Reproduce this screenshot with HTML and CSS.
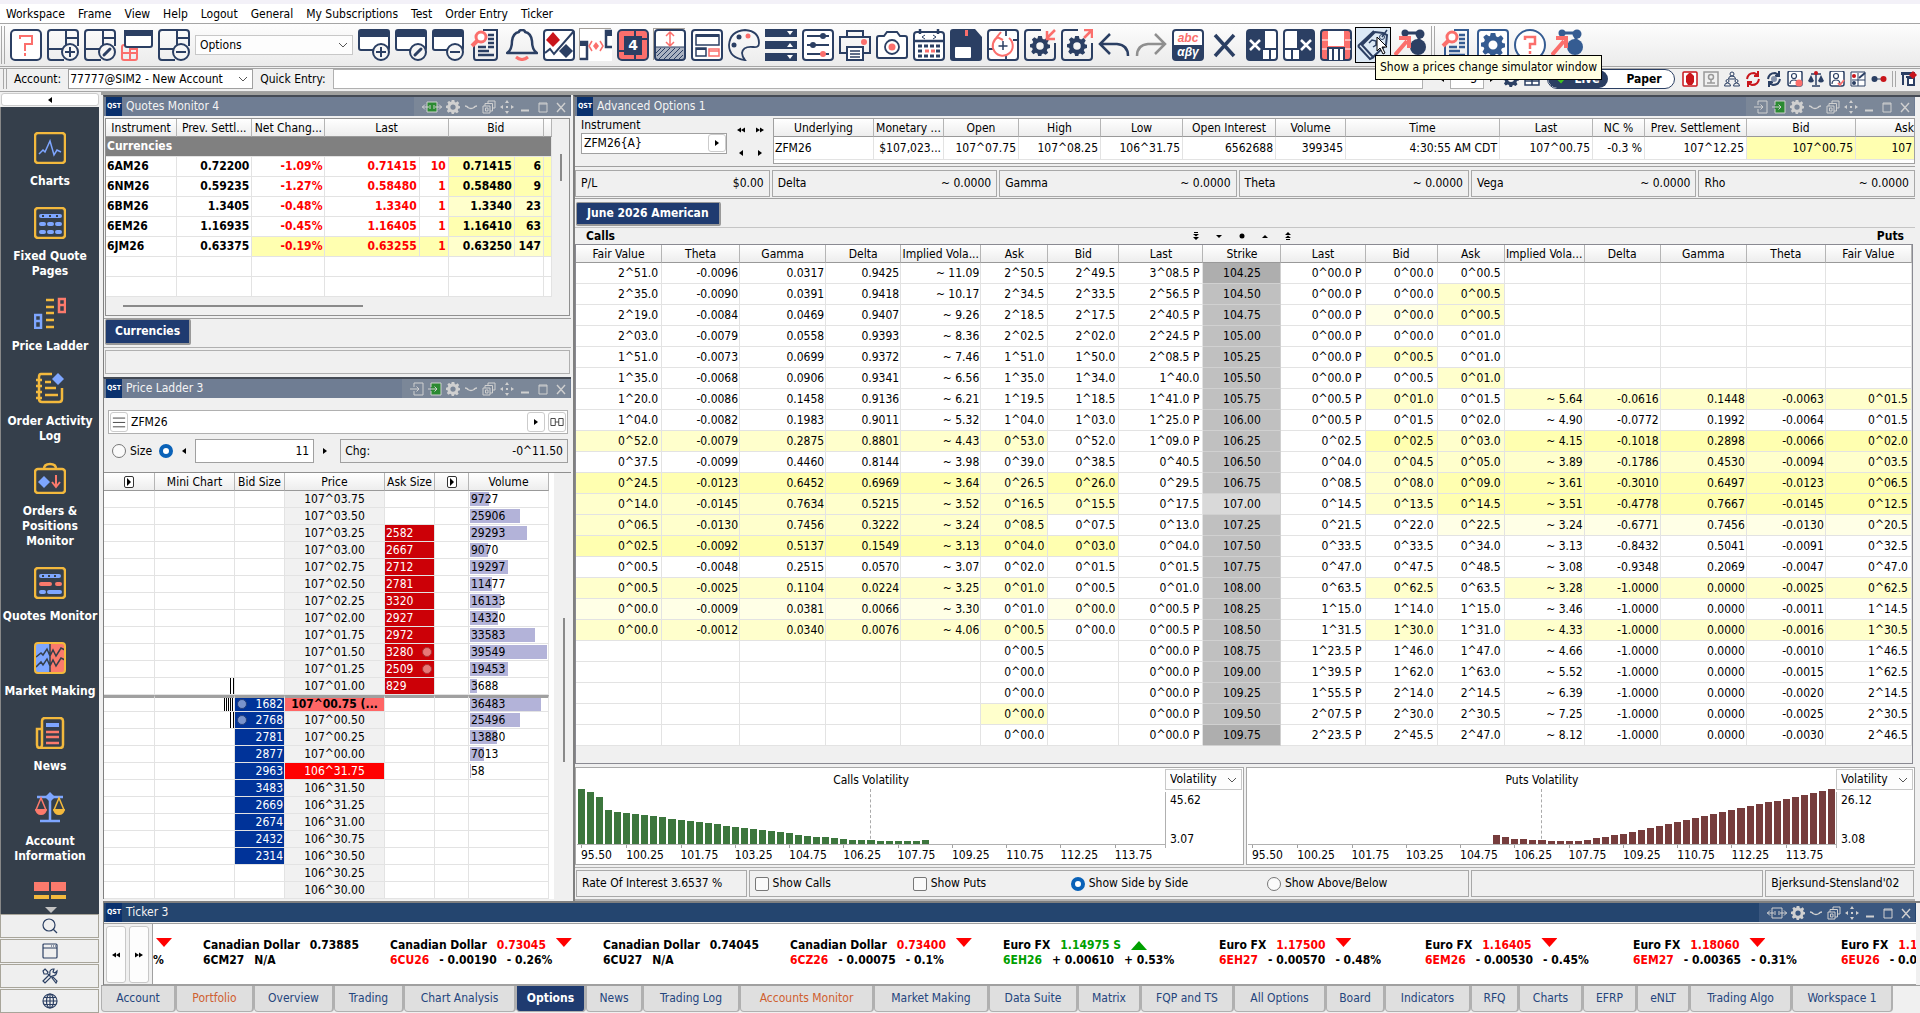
FILE: index.html
```html
<!DOCTYPE html>
<html lang="en">
<head>
<meta charset="utf-8">
<title>QST Workspace - Options</title>
<link rel="stylesheet" href="styles.css">
</head>
<body>
<svg class="sprite" aria-hidden="true">
  <symbol id="grid" viewBox="0 0 32 32"><path d="M17 31H4q-3 0-3-3V4q0-3 3-3h24q3 0 3 3v13M19 1v16M1 20h16M19 9h12" fill="none" stroke="#2b3f63" stroke-width="2"/></symbol>
  <symbol id="win" viewBox="0 0 32 32"><rect x="1" y="1" width="30" height="20" rx="2" fill="#fff" stroke="#2b3f63" stroke-width="2"/><path d="M1 1h30v7H1z" fill="#2b3f63"/></symbol>
  <symbol id="badge" viewBox="0 0 32 32"><circle cx="23" cy="23" r="8" fill="#f6f6f6" stroke="#2b3f63" stroke-width="2"/></symbol>
  <symbol id="plus" viewBox="0 0 32 32"><use href="#badge"/><path d="M23 18v10M18 23h10" stroke="#2b3f63" stroke-width="2"/></symbol>
  <symbol id="pen" viewBox="0 0 32 32"><use href="#badge"/><path d="m20 26 6-6" stroke="#2b3f63" stroke-width="3" stroke-linecap="round"/></symbol>
  <symbol id="minus" viewBox="0 0 32 32"><use href="#badge"/><path d="M18 23h10" stroke="#2b3f63" stroke-width="2"/></symbol>
  <symbol id="report" viewBox="0 0 32 32"><path d="M14 1h14v27q0 3-3 3H7q-2 0-2-3V17" fill="none" stroke="currentColor" stroke-width="2"/><path d="M19 6h6M19 10h6M19 14h6M9 18h8M19 18h6M9 22h11M9 26h16" stroke="currentColor" stroke-width="2.500"/><circle cx="12" cy="8" r="5" fill="#fff" stroke="#fb6f6c" stroke-width="3"/><path d="m8 12-5 5" stroke="#fb6f6c" stroke-width="4"/></symbol>
  <symbol id="gear" viewBox="0 0 16 16"><path fill="currentColor" fill-rule="evenodd" d="M6.500 0h3l.5 2.200 1.300.600L13.300 1.500l1.700 2-1.200 2 .5 1.100L16 7v2.500l-2 .6-.6 1.200 1.100 2-2 1.700-1.900-1.100-1.100.5L9 16H6.500L6 14l-1.300-.6-2 1.100L1 12.500l1.200-2-.5-1.200L0 9V6.500L2 6l.6-1.300-1.100-2 2-1.700 1.900 1.200L6 2zM8 5a3 3 0 1 0 0 6 3 3 0 0 0 0-6z"/></symbol>
  <symbol id="share" viewBox="0 0 32 32"><path d="M12 4h12M25 5v12" stroke="currentColor" stroke-width="3"/><circle cx="11" cy="4" r="3.500" fill="currentColor"/><circle cx="26" cy="5" r="4.500" fill="currentColor"/><circle cx="24" cy="18" r="8" fill="currentColor"/><path d="M1 26 13 12M5 9h10v10" fill="none" stroke="#fb6f6c" stroke-width="4"/></symbol>
  <symbol id="gears" viewBox="0 0 32 32"><path d="M17 1H4q-3 0-3 3v24q0 3 3 3h24q3 0 3-3V14" fill="none" stroke="#2b3f63" stroke-width="2"/><use href="#gear" x="6" y="7" width="20" height="20" color="#2b3f63"/></symbol>
  <symbol id="dock" viewBox="0 0 14 14"><path d="M4 5V1h9v12H4V9M0 7h9M6.500 4.500 9 7 6.500 9.500" fill="none" stroke="currentColor"/></symbol>
  <symbol id="dockgreen" viewBox="0 0 14 14"><path d="M3 1h10v12H3z" fill="#2b8a32"/><path d="M3 5V1h10v12H3V9M0 7h9M6.500 4.500 9 7 6.500 9.500" fill="none" stroke="currentColor"/></symbol>
  <symbol id="link" viewBox="0 0 20 14"><path d="M5 2h10v10H5zM0 7h7M13 7h7M3 4.500.5 7 3 9.500M17 4.500 19.500 7 17 9.500M8 5v4M12 5v4" fill="none" stroke="currentColor"/></symbol>
  <symbol id="linkgreen" viewBox="0 0 20 14"><path d="M5 2h10v10H5z" fill="#2b8a32"/><use href="#link"/></symbol>
  <symbol id="down" viewBox="0 0 14 14"><path d="M1 6q2 0 3 1.500 3 2 6 0Q11 6 13 6" fill="none" stroke="currentColor" stroke-width="1.500"/></symbol>
  <symbol id="stack" viewBox="0 0 14 14"><path d="M1 6h7v7H1zM3 6V3.500h7.500V11H8M6 3.500V1h7v7h-2.500M3.500 8h2.500v3H3.500z" fill="none" stroke="currentColor"/></symbol>
  <symbol id="move" viewBox="0 0 14 14"><path d="m7 0 2 3H5zM7 14l2-3H5zM0 7l3-2v4zM14 7l-3-2v4zM6 6h2v2H6z" fill="currentColor"/></symbol>
  <symbol id="min" viewBox="0 0 14 14"><path d="M3 10.500h8" stroke="currentColor" stroke-width="2"/></symbol>
  <symbol id="max" viewBox="0 0 14 14"><path d="M3 3h8v9H3zM3 4h8" fill="none" stroke="currentColor"/></symbol>
  <symbol id="close" viewBox="0 0 14 14"><path d="m3 3 8 9M11 3l-8 9" stroke="currentColor" stroke-width="1.400"/></symbol>
  <symbol id="chev" viewBox="0 0 10 6"><path d="m1 1 4 4 4-4" fill="none" stroke="#555"/></symbol>
  <symbol id="tl" viewBox="0 0 8 8"><path d="M6 1v6L2 4z"/></symbol>
  <symbol id="tr" viewBox="0 0 8 8"><path d="M2 1v6l4-3z"/></symbol>
  <symbol id="tll" viewBox="0 0 8 8"><path d="M4 1.500v5L0 4zM8 1.500v5L4 4z"/></symbol>
  <symbol id="trr" viewBox="0 0 8 8"><path d="M0 1.500v5L4 4zM4 1.500v5L8 4z"/></symbol>
  <symbol id="man" viewBox="0 0 16 16"><rect x="1" y="0" width="14" height="15" rx="2" fill="#fff" stroke="#2b3f63" stroke-width="1.500"/><circle cx="7" cy="5" r="2.500" fill="none" stroke="#2b3f63" stroke-width="1.200"/><path d="M3 13q0-4 4-4t4 4" fill="none" stroke="#2b3f63" stroke-width="1.200"/></symbol>
</svg>

<header class="top">
  <nav class="menu" aria-label="Main menu">
    <button>Workspace</button><button>Frame</button><button>View</button><button>Help</button><button>Logout</button><button>General</button><button>My Subscriptions</button><button>Test</button><button>Order Entry</button><button>Ticker</button>
  </nav>

  <div class="toolbar" role="toolbar" aria-label="Workspace tools">
    <span class="grip"></span>
    <button aria-label="Help"><svg viewBox="0 0 32 32"><rect x="1" y="1" width="30" height="30" rx="4" fill="#fff" stroke="#2b3f63" stroke-width="2"/><path d="M10 10V7h12v8h-7v7M15 24v3" fill="none" stroke="#fb6f6c" stroke-width="2"/></svg></button>
    <button aria-label="Add workspace"><svg viewBox="0 0 32 32"><use href="#grid"/><use href="#plus"/></svg></button>
    <button aria-label="Edit workspace"><svg viewBox="0 0 32 32"><use href="#grid"/><use href="#pen"/></svg></button>
    <button aria-label="Copy workspace"><svg viewBox="0 0 32 32"><path d="M1 18q0-2 2-2h13v13q0 2-2 2H3q-2 0-2-2zM9 16v15M1 24h15M9 20h7" fill="none" stroke="#fb6f6c" stroke-width="2"/><rect x="4" y="2" width="27" height="16" rx="2" fill="#fff" stroke="#2b3f63" stroke-width="2"/><path d="M3 1h29v6H3z" fill="#2b3f63"/></svg></button>
    <button aria-label="Remove workspace"><svg viewBox="0 0 32 32"><use href="#grid"/><use href="#minus"/></svg></button>
    <span class="pick pick-wide"><select aria-label="Workspace"><option>Options</option></select><svg class="chev"><use href="#chev"/></svg></span>
    <button aria-label="Add window"><svg viewBox="0 0 32 32"><use href="#win"/><use href="#plus"/></svg></button>
    <button aria-label="Edit window"><svg viewBox="0 0 32 32"><use href="#win"/><use href="#pen"/></svg></button>
    <button aria-label="Remove window"><svg viewBox="0 0 32 32"><use href="#win"/><use href="#minus"/></svg></button>
    <button aria-label="Reports" class="navy"><svg viewBox="0 0 32 32"><use href="#report"/></svg></button>
    <button aria-label="Alerts"><svg viewBox="0 0 32 32"><path d="M1 24q5-3 5-12Q7 4 13 3q0-2 3-2t3 2q6 1 7 9 0 9 5 12z" fill="none" stroke="#2b3f63" stroke-width="2.500" stroke-linejoin="round"/><path d="M10 28q6 5 12 0" fill="none" stroke="#fb6f6c" stroke-width="3"/></svg></button>
    <button aria-label="Charts"><svg viewBox="0 0 32 32"><rect x="1" y="1" width="30" height="30" rx="3" fill="#fff" stroke="#2b3f63" stroke-width="2"/><path d="m10 3 7 8-7 7-7-7z" fill="#c9151b"/><path d="m23 15 7 7-7 7-7-7z" fill="#2b3f63"/><path d="m2 24 5-4 4 5L31 2" fill="none" stroke="#2b3f63" stroke-width="2"/></svg></button>
    <button aria-label="Connect" class="sunken"><svg viewBox="0 0 32 32"><path d="M0 13h7v17H0M32 2h-6v16h6" fill="none" stroke="#2b3f63" stroke-width="2.500"/><path d="M0 12h8v5H0zM25 1h7v6h-7z" fill="#2b3f63"/><path d="m16 13 3 4-3 4-3-4z" fill="#fb6f6c"/><path d="m12 12-3 5 3 5M20 12l3 5-3 5" fill="none" stroke="#fb6f6c" stroke-width="1.500"/></svg></button>
    <button aria-label="Four monitors"><svg viewBox="0 0 32 32"><rect x="1" y="1" width="30" height="30" rx="4" fill="#fb6f6c" stroke="#2b3f63" stroke-width="2"/><path d="M18 0v8M0 22h8M24 10h8M18 24v8" stroke="#2b3f63" stroke-width="2"/><rect x="7" y="7" width="18" height="19" fill="#2b3f63"/><text x="16" y="21" class="svg-num">4</text></svg></button>
    <button aria-label="Fit height" class="sunken"><svg viewBox="0 0 32 32"><path d="M2 18h28v12H2z" fill="#aab2c1"/><path d="m3 27 8-8M2 24l5-5M5 30l11-11M10 30l11-11M15 30l11-11M20 30l9-9M25 30l4-4" stroke="#2b3f63"/><rect x="1" y="1" width="30" height="30" rx="3" fill="none" stroke="#2b3f63" stroke-width="2"/><path d="M1 18h30" stroke="#2b3f63"/><path d="M16 4v13M12 7l4-4 4 4M12 13l4 4 4-4" fill="none" stroke="#fb6f6c" stroke-width="1.500"/></svg></button>
    <button aria-label="Layout"><svg viewBox="0 0 32 32"><rect x="1" y="1" width="30" height="30" rx="3" fill="#fff" stroke="#2b3f63" stroke-width="2"/><path d="M5 6h23v10H5zM5 19h10v8H5z" fill="none" stroke="#2b3f63" stroke-width="1.500"/><path d="M5 5h23v3H5zM5 19h10v2H5z" fill="#2b3f63"/><path d="M18 20h10v7H18zM18 22h10" fill="none" stroke="#fb6f6c" stroke-width="1.500"/></svg></button>
    <button aria-label="Colours"><svg viewBox="0 0 32 32"><path d="M17 31Q1 29 1 16 2 2 17 1q14 1 14 13 0 5-6 4-10-1-11 6 0 3 3 7z" fill="none" stroke="#2b3f63" stroke-width="1.800"/><circle cx="11" cy="8" r="2.500" fill="#2b3f63"/><circle cx="6" cy="16" r="2.500" fill="#2b3f63"/><circle cx="20" cy="7" r="2.500" fill="#fb6f6c"/></svg></button>
    <button aria-label="Rows"><svg viewBox="0 0 32 32"><path d="M0 0h32v8H0zM0 12h32v8H0zM0 24h32v8H0z" fill="#2b3f63"/><path d="m22 2 3 4 3-4zM22 18l3-4 3 4zM22 26l3 4 3-4z" fill="#fff"/></svg></button>
    <button aria-label="Settings"><svg viewBox="0 0 32 32"><rect x="1" y="1" width="30" height="30" rx="3" fill="#fff" stroke="#2b3f63" stroke-width="2"/><path d="M5 7h22M5 16h22M5 25h22" stroke="#2b3f63" stroke-width="1.800"/><circle cx="21" cy="7" r="3" fill="#2b3f63"/><circle cx="11" cy="16" r="3" fill="#2b3f63"/><circle cx="21" cy="25" r="3" fill="#fb6f6c"/></svg></button>
    <button aria-label="Print"><svg viewBox="0 0 32 32"><path d="M8 8V2h16v6M8 24H1V8h30v16h-7" fill="none" stroke="#2b3f63" stroke-width="2"/><path d="M8 18h16v13H8z" fill="#fff" stroke="#2b3f63" stroke-width="2"/><path d="M11 22h10M11 25h10M11 28h10" stroke="#2b3f63" stroke-width="1.500"/><circle cx="25" cy="13" r="3" fill="#fb6f6c"/></svg></button>
    <button aria-label="Screenshot"><svg viewBox="0 0 32 32"><path d="M3 7h5l3-4h10l3 4h5q2 0 2 2v18q0 2-2 2H3q-2 0-2-2V9q0-2 2-2z" fill="#fff" stroke="#2b3f63" stroke-width="2"/><circle cx="16" cy="18" r="7" fill="none" stroke="#2b3f63" stroke-width="1.800"/><circle cx="16" cy="18" r="3.500" fill="#fb6f6c"/></svg></button>
    <button aria-label="Calendar"><svg viewBox="0 0 32 32"><rect x="1" y="3" width="30" height="28" rx="3" fill="#fff" stroke="#2b3f63" stroke-width="2"/><path d="M1 12h30M7 0v5M25 0v5" stroke="#2b3f63" stroke-width="2.500"/><path d="m12 6-3 2 3 2M20 6l3 2-3 2" fill="none" stroke="#2b3f63"/><path d="M5 17h22M5 27h22" stroke="#2b3f63" stroke-width="3" stroke-dasharray="4 2"/><path d="M5 22h6M23 22h4" stroke="#2b3f63" stroke-width="3" stroke-dasharray="4 2"/><path d="M12 22h10" stroke="#fb6f6c" stroke-width="3" stroke-dasharray="4 2"/></svg></button>
    <button aria-label="Save"><svg viewBox="0 0 32 32"><path d="M3 0h22l7 8v21q0 3-3 3H3q-3 0-3-3V3q0-3 3-3z" fill="#2b3f63"/><path d="M15 1h3v6h-3z" fill="#fb6f6c"/><rect x="5" y="18" width="16" height="11" rx="1" fill="#fff"/></svg></button>
    <button aria-label="Restore"><svg viewBox="0 0 32 32"><rect x="1" y="1" width="30" height="30" rx="3" fill="#fff" stroke="#2b3f63" stroke-width="2"/><path d="M19 1v6M1 20h6M26 11h5M19 27v4" stroke="#2b3f63" stroke-width="1.800"/><path d="M11 8a10 10 0 1 0 11 1M14 3l-4 5 6 3" fill="none" stroke="#fb6f6c" stroke-width="2"/><path d="M16 12v9M11.500 17h9" stroke="#2b3f63" stroke-width="1.500"/></svg></button>
    <button aria-label="Import settings"><svg viewBox="0 0 32 32"><use href="#gears"/><path d="m31 1-8 8M23 2v8h8" fill="none" stroke="#fb6f6c" stroke-width="2.500"/></svg></button>
    <button aria-label="Export settings"><svg viewBox="0 0 32 32"><use href="#gears"/><path d="m23 9 8-8M23 1h8v8" fill="none" stroke="#fb6f6c" stroke-width="2.500"/></svg></button>
    <button aria-label="Undo"><svg viewBox="0 0 32 32"><path d="M12 5 2 15l10 10M2 15h17q11 1 11 12" fill="none" stroke="#2b3f63" stroke-width="2.500"/></svg></button>
    <button aria-label="Redo"><svg viewBox="0 0 32 32"><path d="m20 5 10 10-10 10M30 15H13Q2 16 2 27" fill="none" stroke="#8f8f8f" stroke-width="2.500"/></svg></button>
    <button aria-label="Fonts"><svg viewBox="0 0 32 32"><rect x="1" y="1" width="30" height="30" rx="3" fill="#fff" stroke="#2b3f63" stroke-width="2"/><path d="M1 16h30v12q0 3-3 3H4q-3 0-3-3z" fill="#2b3f63"/><text x="16" y="13" class="svg-abc">abc</text><text x="16" y="27" class="svg-abc svg-white">αβγ</text></svg></button>
    <button aria-label="Close all"><svg viewBox="0 0 32 32"><path d="m6 6 19 21M25 6 6 27" stroke="#2b3f63" stroke-width="3.500"/></svg></button>
    <button aria-label="Close left"><svg viewBox="0 0 32 32"><rect x="1" y="1" width="30" height="30" rx="3" fill="#fff" stroke="#2b3f63" stroke-width="2"/><path d="M3 1h16v20h-2v10H3l-2-2V3z" fill="#2b3f63"/><path d="M18 20h13M24 20v11" stroke="#2b3f63" stroke-width="2"/><path d="m4 11 10 10M14 11 4 21" stroke="#fff" stroke-width="2.500"/></svg></button>
    <button aria-label="Close right"><svg viewBox="0 0 32 32"><rect x="1" y="1" width="30" height="30" rx="3" fill="#fff" stroke="#2b3f63" stroke-width="2"/><path d="M14 1h15l2 2v26l-2 2H16V21h-2z" fill="#2b3f63"/><path d="M1 20h15M9 20v11" stroke="#2b3f63" stroke-width="2"/><path d="m18 11 10 10M28 11 18 21" stroke="#fff" stroke-width="2.500"/></svg></button>
    <button aria-label="Frame layout"><svg viewBox="0 0 32 32"><rect x="1" y="1" width="30" height="30" rx="3" fill="#fb6f6c" stroke="#2b3f63" stroke-width="2"/><path d="M8 2h16v15H8z" fill="#fff"/><path d="M8 19h16v12H8z" fill="#fff"/><path d="M8 31V19h16v12M13 19v12M19 19v12" fill="none" stroke="#2b3f63" stroke-width="2"/><path d="M2 11h6M2 20h5M25 11h6M25 20h6" stroke="#fff"/></svg></button>
    <button aria-label="Show a prices change simulator window" class="hot"><svg viewBox="0 0 32 32"><path d="M5 16 18 3l8 1 4 2-1 10-13 12zM1 17l12 13 4-2M1 17 17 2" fill="none" stroke="#2b3f63" stroke-width="2"/><circle cx="25" cy="8" r="2.500" fill="none" stroke="#2b3f63"/><path d="m25 8 5-7M12 14l3-3 4 1v4l-3 2" fill="none" stroke="#2b3f63" stroke-width="1.500"/></svg><svg class="cursor" viewBox="0 0 12 19"><path d="M1 1v14l3-3 3 6 2-1-3-6h5z" fill="#fff" stroke="#000"/></svg><span class="tip" role="tooltip">Show a prices change simulator window</span></button>
    <button aria-label="Share" class="navy"><svg viewBox="0 0 32 32"><use href="#share"/></svg></button>
    <span class="grip"></span>
    <button aria-label="Search reports" class="blue"><svg viewBox="0 0 32 32"><use href="#report"/></svg></button>
    <button aria-label="Preferences" class="blue"><svg viewBox="0 0 32 32"><rect x="1" y="1" width="30" height="30" rx="3" fill="#fff" stroke="#355c92" stroke-width="2"/><use href="#gear" x="4" y="4" width="24" height="24"/></svg></button>
    <button aria-label="About"><svg viewBox="0 0 32 32"><circle cx="16" cy="16" r="15" fill="#fff" stroke="#355c92" stroke-width="2"/><path d="M11 11V8h10v7h-5v5M16 22v3" fill="none" stroke="#fb6f6c" stroke-width="2.500"/></svg></button>
    <button aria-label="Share selection" class="blue"><svg viewBox="0 0 32 32"><use href="#share"/></svg></button>
  </div>

  <div class="account">
    <span class="grip"></span>
    <label for="acct">Account:</label>
    <span class="pick pick-flat"><select id="acct"><option>77777@SIM2 - New Account</option></select><svg class="chev"><use href="#chev"/></svg></span>
    <label for="quick">Quick Entry:</label>
    <input id="quick" class="quick" type="text">
    <div class="spin"><button aria-label="Less"><svg class="tri"><use href="#tl"/></svg></button><input type="text" value="5" aria-label="Quantity"><button aria-label="More"><svg class="tri"><use href="#tr"/></svg></button></div>
    <div class="mini">
      <button aria-label="Options" class="navy"><svg viewBox="0 0 16 16"><use href="#gear"/></svg></button>
      <button aria-label="Table"><svg viewBox="0 0 16 16"><path d="M1 2h14v12H1zM1 6h14M1 10h14M8 2v12" fill="#fff" stroke="#2b3f63" stroke-width="1.500"/></svg></button>
    </div>
    <div class="mode"><button class="live"><svg class="tick" viewBox="0 0 10 10"><path d="m1 5 3 3 5-6" fill="none" stroke="#3ec41f" stroke-width="2"/></svg>Live</button><button class="paper">Paper</button></div>
    <div class="mini">
      <button aria-label="Stop"><svg viewBox="0 0 16 16"><rect x="1" y="1" width="14" height="14" rx="1" fill="#fff" stroke="#c9151b" stroke-width="1.500"/><path d="M4 5l1-1 1-1 1-1h2l1 1 1 1 1 1v6l-2 3H6l-2-3z" fill="#c9151b"/></svg></button>
      <button aria-label="Disabled"><svg viewBox="0 0 16 16"><path d="M1 1h14v14H1zM4 12h8M8 9v3" fill="none" stroke="#999" stroke-width="1.500"/><circle cx="8" cy="6" r="2.500" fill="none" stroke="#999" stroke-width="1.500"/></svg></button>
      <button aria-label="Groups"><svg viewBox="0 0 16 16"><g fill="none" stroke="#2b3f63"><circle cx="8" cy="3" r="2"/><path d="M4.500 8q0-3 3.500-3t3.500 3z"/><circle cx="3.500" cy="10" r="1.500"/><circle cx="12.500" cy="10" r="1.500"/><path d="M.5 15q0-3 3-3t3 3zM9.500 15q0-3 3-3t3 3z"/></g></svg></button>
      <button aria-label="Refresh"><svg viewBox="0 0 16 16"><path d="M2 8q1-6 7-6l4 2M13 0v5H9M14 8q-1 6-7 6l-4-2M3 16v-5h4" fill="none" stroke="#c9151b" stroke-width="2"/></svg></button>
      <button aria-label="Reload"><svg viewBox="0 0 16 16"><path d="M2 8q1-6 7-6l4 2M13 0v5H9M14 8q-1 6-7 6l-4-2M3 16v-5h4" fill="none" stroke="#2b3f63" stroke-width="2"/><circle cx="8" cy="8" r="3" fill="#8693ac"/></svg></button>
      <button aria-label="User alerts"><svg viewBox="0 0 16 16"><use href="#man"/><circle cx="12" cy="12" r="3.500" fill="#fb6f6c"/></svg></button>
      <button aria-label="Risk"><svg viewBox="0 0 16 16"><path d="M8 2v12M3 3h10M4 15h8" stroke="#2b3f63" stroke-width="1.500"/><path d="M0 10 3 4l3 6q-3 3-6 0M10 10l3-6 3 6q-3 3-6 0" fill="#2b3f63"/><circle cx="8" cy="2" r="2" fill="#c9151b"/></svg></button>
      <button aria-label="User check"><svg viewBox="0 0 16 16"><use href="#man"/><path d="m9 12 2 2 4-5" fill="none" stroke="#fb6f6c" stroke-width="1.800"/></svg></button>
      <button aria-label="Levels"><svg viewBox="0 0 16 16"><path d="M1 1h14v14H1zM8 2v13M2 9h13" fill="#fff" stroke="#2b3f63"/><circle cx="4" cy="5" r="2" fill="#c9151b"/><circle cx="4" cy="12" r="2" fill="#2b3f63"/><path d="m9 7 6-5" stroke="#2b3f63" stroke-width="2"/></svg></button>
      <button aria-label="Link pair" class="sunken"><svg viewBox="0 0 16 16"><path d="M2 8h12" stroke="#2b3f63"/><circle cx="3.500" cy="8" r="3" fill="#2b3f63"/><circle cx="12.500" cy="8" r="3" fill="#c9151b"/></svg></button>
      <span class="grip"></span>
      <button aria-label="Pop out"><svg viewBox="0 0 16 16"><path d="M2 14V2h9M5 6h6" fill="none" stroke="#2b3f63" stroke-width="2"/><path d="M6 6h8v9H6zM0 1h14v3H0z" fill="#2b3f63"/><path d="M8 8h4v5H8z" fill="#fff"/><path d="m12 0 4 4-4 4-4-4z" fill="#c9151b"/></svg></button>
    </div>
  </div>
</header>

<div class="shell">
  <aside class="side">
    <button class="collapse" aria-label="Collapse"><svg class="tri"><use href="#tl"/></svg></button>
    <nav class="rail" aria-label="Applications">
      <a href="#charts"><svg viewBox="0 0 32 32"><rect x="1" y="1" width="30" height="30" rx="3" fill="none" stroke="#f3b93d" stroke-width="2.500"/><path d="m5 22 4-4 2 2 5-11 4 14 3-5 4 2" fill="none" stroke="#7ea6ff" stroke-width="1.500"/></svg>Charts</a>
      <a href="#fixed"><svg viewBox="0 0 32 32"><rect x="1" y="1" width="30" height="30" rx="3" fill="none" stroke="#f3b93d" stroke-width="2.500"/><g stroke="#7ea6ff" stroke-width="4" stroke-linecap="round"><path d="M7 9h19M7 17h3M15 17h3M23 17h3M7 25h3M15 25h3M23 25h3"/></g><path d="M8 9h2M15 9h2M22 9h2" stroke="#353f4b" stroke-width="2"/></svg>Fixed Quote Pages</a>
      <a href="#ladder"><svg viewBox="0 0 32 32"><path d="M12 3h8M12 10h8M12 16h8M12 23h8M12 30h8" stroke="#f3b93d" stroke-width="2.500"/><path d="M25 2h6v13h-6zM25 8h6" fill="none" stroke="#fb7a6c" stroke-width="2.500"/><path d="M1 18h6v13H1zM1 24h6" fill="none" stroke="#7ea6ff" stroke-width="2.500"/></svg>Price Ladder</a>
      <a href="#log"><svg viewBox="0 0 32 32"><path d="M18 2H7q-2 0-2 3v22q0 3 3 3h17q3 0 3-3V16M2 8h6M2 14h6M2 20h6M2 26h6M11 10h6M11 16h11M11 23h13" fill="none" stroke="#f3b93d" stroke-width="2.500"/><path d="m24 1 6 6-6 6-6-6z" fill="#7ea6ff"/></svg>Order Activity Log</a>
      <a href="#orders"><svg viewBox="0 0 32 32"><path d="M10 7q0-5 6-5t6 5" fill="none" stroke="#f3b93d" stroke-width="2.500"/><rect x="1" y="7" width="30" height="24" rx="3" fill="none" stroke="#f3b93d" stroke-width="2.500"/><path d="m10 14 6 6-6 6-6-6z" fill="#7ea6ff"/><path d="M22 13v11M18 20l4 5 4-5" fill="none" stroke="#fb7a6c" stroke-width="2"/></svg>Orders &amp; Positions Monitor</a>
      <a href="#quotes"><svg viewBox="0 0 32 32"><rect x="1" y="1" width="30" height="30" rx="3" fill="none" stroke="#f3b93d" stroke-width="2.500"/><path d="M7 9h18M7 25h3M15 25h11" stroke="#7ea6ff" stroke-width="4" stroke-linecap="round"/><path d="M7 17h9M23 17h3" stroke="#fb7a6c" stroke-width="4" stroke-linecap="round"/><path d="M8 9h2M14 9h2M20 9h2" stroke="#353f4b" stroke-width="2"/></svg>Quotes Monitor</a>
      <a href="#mm"><svg viewBox="0 0 32 32"><path d="M1 1h15v30H1z" fill="#7ea6ff"/><path d="M16 1h15v30H16z" fill="#fb7a6c"/><path d="m2 15 5-4 2 2 4-6 3 7 3-6 3 6 5-8 4 2M2 25l5-5 2 3 4-6 3 7 3-6 3 6 5-8 4 2M16 1v30" fill="none" stroke="#353f4b" stroke-width="1.500"/><rect x="1" y="1" width="30" height="30" rx="3" fill="none" stroke="#f3b93d" stroke-width="2"/></svg>Market Making</a>
      <a href="#news"><svg viewBox="0 0 32 32"><path d="M8 12H3v16q0 3 3 3h20q3 0 3-3V4q0-3-3-3H11Q8 1 8 4v24q0 3-3 3" fill="none" stroke="#f3b93d" stroke-width="2.500"/><path d="M12 8h13" stroke="#7ea6ff" stroke-width="4"/><path d="M12 15h13M12 20h13M12 26h13" stroke="#fb7a6c" stroke-width="2.500"/></svg>News</a>
      <a href="#acctinfo"><svg viewBox="0 0 32 32"><path d="M3 5h26M16 5v24M6 29h20" stroke="#7ea6ff" stroke-width="2.500"/><path d="m16 0 5 5-5 5-5-5z" fill="#7ea6ff"/><path d="m2 18 5-12 5 12z" fill="none" stroke="#fb7a6c" stroke-width="1.500"/><path d="M1 17h12q-1 6-6 6t-6-6z" fill="#fb7a6c"/><path d="m20 18 5-12 5 12z" fill="none" stroke="#f3b93d" stroke-width="1.500"/><path d="M19 17h12q-1 6-6 6t-6-6z" fill="#f3b93d"/></svg>Account Information</a>
      <a href="#matrix" aria-label="Matrix"><svg viewBox="0 0 32 32"><path d="M0 0h15v9H0zM17 0h15v9H17z" fill="#fb7a6c"/><path d="M0 13h15v4H0zM17 13h15v4H17z" fill="#f3b93d"/></svg></a>
      <svg class="more" viewBox="0 0 12 6"><path d="M0 0h12L6 6z" fill="#c3c3c3"/></svg>
    </nav>
    <div class="tools">
      <button aria-label="Search"><svg viewBox="0 0 16 16"><circle cx="7" cy="7" r="6"/><path d="m11 11 4 4"/></svg></button>
      <button aria-label="Windows"><svg viewBox="0 0 16 16"><rect x="1" y="1" width="14" height="14" rx="1"/><path d="M1 5h14M9 3h1M11 3h1M13 3h1"/></svg></button>
      <button aria-label="Tools"><svg viewBox="0 0 16 16"><path d="m1 13 7-7q-1-4 3-5l1 0-1 3 2 1 2-2q0 5-5 5l-7 7zM3 1l3 3-1 2-3 0-1-3zM6 6l3 3M10 10l4 5 1-2-4-4z"/></svg></button>
      <button aria-label="Language"><svg viewBox="0 0 16 16"><circle cx="8" cy="8" r="7"/><ellipse cx="8" cy="8" rx="3.500" ry="7"/><path d="M1 8h14M2 4.500h12M2 11.500h12M8 1v14"/></svg></button>
    </div>
  </aside>

  <main class="desk">
    <div class="panes">
      <div class="left">
        <section class="window">
          <header class="title"><b class="qst">QST</b><h2>Quotes Monitor 4</h2><div class="ctl"><svg class="wide"><use href="#linkgreen"/></svg><svg><use href="#gear"/></svg><svg><use href="#down"/></svg><svg><use href="#stack"/></svg><svg><use href="#move"/></svg><svg><use href="#min"/></svg><svg><use href="#max"/></svg><svg><use href="#close"/></svg></div></header>
          <div class="quotes">
            <table class="qtable">
              <colgroup><col class="q1"><col class="q2"><col class="q3"><col class="q4"><col class="q5"><col class="q6"><col class="q5"><col class="q7"></colgroup>
              <thead><tr><th>Instrument</th><th>Prev. Settl...</th><th>Net Chang...</th><th colspan="2">Last</th><th colspan="2">Bid</th><th></th></tr></thead>
              <tbody>
                <tr class="group"><td colspan="8">Currencies</td></tr>
                <tr><th>6AM26</th><td>0.72200</td><td class="neg">-1.09%</td><td class="neg">0.71415</td><td class="neg">10</td><td class="y3">0.71415</td><td class="y3">6</td><td class="y3"></td></tr>
                <tr><th>6NM26</th><td>0.59235</td><td class="neg">-1.27%</td><td class="neg">0.58480</td><td class="neg">1</td><td class="y3">0.58480</td><td class="y3">9</td><td class="y3"></td></tr>
                <tr><th>6BM26</th><td>1.3405</td><td class="neg">-0.48%</td><td class="neg">1.3340</td><td class="neg">1</td><td class="y2">1.3340</td><td class="y2">23</td><td class="y3"></td></tr>
                <tr><th>6EM26</th><td>1.16935</td><td class="neg">-0.45%</td><td class="neg">1.16405</td><td class="neg">1</td><td class="y3">1.16410</td><td class="y3">63</td><td class="y3"></td></tr>
                <tr><th>6JM26</th><td>0.63375</td><td class="neg y3">-0.19%</td><td class="neg y3">0.63255</td><td class="neg y3">1</td><td class="y2">0.63250</td><td class="y2">147</td><td class="y3"></td></tr>
                <tr><td></td><td></td><td></td><td colspan="2"></td><td colspan="2"></td><td></td></tr>
                <tr><td></td><td></td><td></td><td colspan="2"></td><td colspan="2"></td><td></td></tr>
              </tbody>
            </table>
            <div class="vbar"><i></i></div>
            <div class="hbar"><i></i></div>
          </div>
          <div class="tabline"><button class="tab">Currencies</button></div>
          <div class="status"></div>
        </section>

        <section class="window ladder">
          <header class="title"><b class="qst">QST</b><h2>Price Ladder 3</h2><div class="ctl"><svg><use href="#dock"/></svg><svg><use href="#dockgreen"/></svg><svg><use href="#gear"/></svg><svg><use href="#down"/></svg><svg><use href="#stack"/></svg><svg><use href="#move"/></svg><svg><use href="#min"/></svg><svg><use href="#max"/></svg><svg><use href="#close"/></svg></div></header>
          <div class="symbol">
            <button class="sq" aria-label="Menu"><svg viewBox="0 0 16 16"><path d="M1 3.500h14M1 8.500h14M1 13.500h14" stroke="#333"/></svg></button>
            <input type="text" value="ZFM26" aria-label="Ladder instrument">
            <button class="sq" aria-label="Pick"><svg class="tri"><use href="#tr"/></svg></button>
            <button class="sq" aria-label="Link"><svg viewBox="0 0 16 16"><path d="M1 4h5v8H1zM10 4h5v8h-5zM6 8h4" fill="none" stroke="#333"/></svg></button>
          </div>
          <div class="sizes">
            <label><input type="radio" name="size">Size</label>
            <input type="radio" name="size" checked aria-label="Quantity">
            <button aria-label="Decrease"><svg class="tri"><use href="#tl"/></svg></button>
            <input class="qty" type="text" value="11" aria-label="Order quantity">
            <button aria-label="Increase"><svg class="tri"><use href="#tr"/></svg></button>
            <div class="chg"><span>Chg:</span><span>-0^11.50</span></div>
          </div>
          <div class="ltwrap">
            <table class="ltable">
              <colgroup><col class="l1"><col class="l2"><col class="l3"><col class="l4"><col class="l3"><col class="l5"><col class="l2"></colgroup>
              <thead><tr><th><svg class="exp" viewBox="0 0 10 12"><rect x=".5" y=".5" width="9" height="11" rx="1.500" fill="#fff" stroke="#333"/><path d="M3 2v8l4-4z"/></svg></th><th>Mini Chart</th><th>Bid Size</th><th>Price</th><th>Ask Size</th><th><svg class="exp" viewBox="0 0 10 12"><rect x=".5" y=".5" width="9" height="11" rx="1.500" fill="#fff" stroke="#333"/><path d="M3 2v8l4-4z"/></svg></th><th>Volume</th></tr></thead>
              <tbody id="ladder-rows"></tbody>
            </table>
            <div class="lbar"><i></i></div>
          </div>
        </section>
      </div>

      <section class="window options">
        <header class="title"><b class="qst">QST</b><h2>Advanced Options 1</h2><div class="ctl"><svg><use href="#dock"/></svg><svg><use href="#dockgreen"/></svg><svg><use href="#gear"/></svg><svg><use href="#down"/></svg><svg><use href="#stack"/></svg><svg><use href="#move"/></svg><svg><use href="#min"/></svg><svg><use href="#max"/></svg><svg><use href="#close"/></svg></div></header>
        <div class="under">
          <div class="inst"><label for="inst">Instrument</label><div class="instbox"><input id="inst" type="text" value="ZFM26{A}"><button class="sq" aria-label="Choose instrument"><svg class="tri"><use href="#tr"/></svg></button></div></div>
          <div class="steps"><button aria-label="First"><svg class="tri"><use href="#tll"/></svg></button><button aria-label="Last"><svg class="tri"><use href="#trr"/></svg></button><button aria-label="Previous"><svg class="tri"><use href="#tl"/></svg></button><button aria-label="Next"><svg class="tri"><use href="#tr"/></svg></button></div>
          <div class="uwrap">
            <table class="utable">
              <colgroup><col class="u1"><col class="u2"><col class="u3"><col class="u4"><col class="u4"><col class="u5"><col class="u2"><col class="u6"><col class="u5"><col class="u7"><col class="u8"><col class="u9"><col class="u10"></colgroup>
              <thead><tr><th>Underlying</th><th>Monetary ...</th><th>Open</th><th>High</th><th>Low</th><th>Open Interest</th><th>Volume</th><th>Time</th><th>Last</th><th>NC %</th><th>Prev. Settlement</th><th>Bid</th><th class="clip">Ask</th></tr></thead>
              <tbody><tr><td class="first">ZFM26</td><td>$107,023...</td><td>107^07.75</td><td>107^08.25</td><td>106^31.75</td><td>6562688</td><td>399345</td><td>4:30:55 AM CDT</td><td>107^00.75</td><td>-0.3 %</td><td>107^12.25</td><td class="y3">107^00.75</td><td class="y3">107</td></tr></tbody>
            </table>
          </div>
        </div>
        <dl class="greeks">
          <div><dt>P/L</dt><dd>$0.00</dd></div><div><dt>Delta</dt><dd>~ 0.0000</dd></div><div><dt>Gamma</dt><dd>~ 0.0000</dd></div><div><dt>Theta</dt><dd>~ 0.0000</dd></div><div><dt>Vega</dt><dd>~ 0.0000</dd></div><div><dt>Rho</dt><dd>~ 0.0000</dd></div>
        </dl>
        <div class="months"><button class="tab">June 2026 American</button></div>
        <div class="sides"><b>Calls</b><div class="jumps"><svg viewBox="0 0 8 8"><path d="M2 0h4v1H2zM1 2h6L4 4.500zM1 5h6L4 8z"/></svg><svg viewBox="0 0 8 8"><path d="M1 3h6L4 6z"/></svg><svg viewBox="0 0 8 8"><circle cx="4" cy="4" r="2.500"/></svg><svg viewBox="0 0 8 8"><path d="M1 6h6L4 3z"/></svg><svg viewBox="0 0 8 8"><path d="M2 7h4v1H2zM1 6h6L4 3.500zM1 3h6L4 0z"/></svg></div><b>Puts</b></div>
        <div class="chain">
          <table class="otable">
            <colgroup><col class="o86"><col class="o78"><col class="o86"><col class="o75"><col class="o80"><col class="o67"><col class="o71"><col class="o84"><col class="o78"><col class="o84"><col class="o72"><col class="o67"><col class="o80"><col class="o76"><col class="o86"><col class="o79"><col class="o86"></colgroup>
            <thead><tr><th>Fair Value</th><th>Theta</th><th>Gamma</th><th>Delta</th><th>Implied Vola...</th><th>Ask</th><th>Bid</th><th>Last</th><th>Strike</th><th>Last</th><th>Bid</th><th>Ask</th><th>Implied Vola...</th><th>Delta</th><th>Gamma</th><th>Theta</th><th>Fair Value</th></tr></thead>
            <tbody id="chain-rows"></tbody>
          </table>
        </div>
        <div class="charts">
          <figure class="chart calls">
            <div class="plot"><figcaption>Calls Volatility</figcaption><div class="bars" id="calls-bars"></div><div class="axis" id="calls-axis"></div></div>
            <div class="scale"><span class="pick"><select aria-label="Calls measure"><option>Volatility</option></select><svg class="chev"><use href="#chev"/></svg></span><div class="range"><span>45.62</span><span>3.07</span></div></div>
          </figure>
          <figure class="chart puts">
            <div class="plot"><figcaption>Puts Volatility</figcaption><div class="bars" id="puts-bars"></div><div class="axis" id="puts-axis"></div></div>
            <div class="scale"><span class="pick"><select aria-label="Puts measure"><option>Volatility</option></select><svg class="chev"><use href="#chev"/></svg></span><div class="range"><span>26.12</span><span>3.08</span></div></div>
          </figure>
        </div>
        <div class="foot">
          <div class="cell">Rate Of Interest 3.6537 %</div>
          <div class="cell show"><label><input type="checkbox">Show Calls</label><label><input type="checkbox">Show Puts</label><label><input type="radio" name="show" checked>Show Side by Side</label><label><input type="radio" name="show">Show Above/Below</label></div>
          <div class="cell"></div>
          <div class="cell">Bjerksund-Stensland'02</div>
        </div>
      </section>
    </div>

    <section class="window ticker">
      <header class="title active"><b class="qst">QST</b><h2>Ticker 3</h2><div class="ctl"><svg class="wide"><use href="#link"/></svg><svg><use href="#gear"/></svg><svg><use href="#down"/></svg><svg><use href="#stack"/></svg><svg><use href="#move"/></svg><svg><use href="#min"/></svg><svg><use href="#max"/></svg><svg><use href="#close"/></svg></div></header>
      <div class="tape">
        <button aria-label="Scroll back"><svg class="tri"><use href="#tll"/></svg></button><button aria-label="Scroll forward"><svg class="tri"><use href="#trr"/></svg></button>
        <ul>
          <li><p><i class="dn"></i></p><p>%</p></li>
          <li><p><span>Canadian Dollar</span><span>0.73885</span></p><p><span>6CM27</span><span>N/A</span></p></li>
          <li><p><span>Canadian Dollar</span><span class="neg">0.73045</span><i class="dn"></i></p><p><span class="neg">6CU26</span><span>- 0.00190</span><span>- 0.26%</span></p></li>
          <li><p><span>Canadian Dollar</span><span>0.74045</span></p><p><span>6CU27</span><span>N/A</span></p></li>
          <li><p><span>Canadian Dollar</span><span class="neg">0.73400</span><i class="dn"></i></p><p><span class="neg">6CZ26</span><span>- 0.00075</span><span>- 0.1%</span></p></li>
          <li><p><span>Euro FX</span><span class="pos">1.14975 S</span><i class="up"></i></p><p><span class="pos">6EH26</span><span>+ 0.00610</span><span>+ 0.53%</span></p></li>
          <li><p><span>Euro FX</span><span class="neg">1.17500</span><i class="dn"></i></p><p><span class="neg">6EH27</span><span>- 0.00570</span><span>- 0.48%</span></p></li>
          <li><p><span>Euro FX</span><span class="neg">1.16405</span><i class="dn"></i></p><p><span class="neg">6EM26</span><span>- 0.00530</span><span>- 0.45%</span></p></li>
          <li><p><span>Euro FX</span><span class="neg">1.18060</span><i class="dn"></i></p><p><span class="neg">6EM27</span><span>- 0.00365</span><span>- 0.31%</span></p></li>
          <li><p><span>Euro FX</span><span class="neg">1.1</span></p><p><span class="neg">6EU26</span><span>- 0.0</span></p></li>
        </ul>
      </div>
    </section>

    <nav class="spaces" aria-label="Workspaces">
      <button>Account</button><button class="warn">Portfolio</button><button>Overview</button><button>Trading</button><button>Chart Analysis</button><button class="on">Options</button><button>News</button><button>Trading Log</button><button class="warn">Accounts Monitor</button><button>Market Making</button><button>Data Suite</button><button>Matrix</button><button>FQP and TS</button><button>All Options</button><button>Board</button><button>Indicators</button><button>RFQ</button><button>Charts</button><button>EFRP</button><button>eNLT</button><button>Trading Algo</button><button>Workspace 1</button>
    </nav>
  </main>
</div>
<script src="app.js"></script>
</body>
</html>
```
FILE: styles.css
```css
* { box-sizing: border-box; }
body { margin: 0; min-height: 100vh; display: flex; flex-direction: column; background: #f0f0f0; color: #000; font: 12px/15px "DejaVu Sans Condensed", "Noto Sans", sans-serif; overflow: hidden; }
button, input, select { font: inherit; color: inherit; margin: 0; padding: 0; border: 0; background: none; border-radius: 0; outline: 0; }
button { display: grid; place-items: center; }
h2, p, dl, dd, ul, figure { margin: 0; padding: 0; font: inherit; }
a { color: inherit; text-decoration: none; }
table { border-collapse: separate; border-spacing: 0; table-layout: fixed; }
th, td { padding: 0; font-weight: normal; white-space: nowrap; overflow: hidden; }
svg { display: block; }
.sprite { width: 0; height: 0; position: absolute; }
.neg { color: #f00; }
.pos { color: #00a000; }
.navy { color: #2b3f63; }
.blue { color: #355c92; }
.y1 { background: #ffffe6; }
.y2 { background: #ffffcc; }
.y3 { background: #ffffb0; }
.tri { width: 8px; height: 8px; }
.grip { width: 4px; align-self: stretch; border: 1px solid #a8a8a8; border-width: 0 1px; }

/* menu and toolbars */
.top { border-top: 4px solid #f3f1f8; }
.menu { display: flex; gap: 13px; height: 20px; padding: 1px 6px 0; background: #fff; border-bottom: 1px solid #a5a5a5; }
.toolbar { display: flex; align-items: center; gap: 5px; height: 43px; padding: 2px 1px; background: linear-gradient(#fdfdfd, #ebebeb); border-bottom: 1px solid #a5a5a5; }
.toolbar button { width: 32px; height: 32px; }
.toolbar button > svg { width: 32px; height: 32px; }
.toolbar .sunken { background: #fff; box-shadow: -1px -1px 0 #a5a09a; }
.toolbar .hot { position: relative; background: #dce9f5; box-shadow: 0 0 0 1px #dce9f5, 0 0 0 2px #000; }
.toolbar .hot > .cursor { position: absolute; left: 19px; top: 7px; width: 12px; height: 19px; z-index: 3; }
.tip { position: absolute; left: 18px; top: 26px; height: 25px; padding: 4px 4px; border: 1px solid #000; background: #ffffe1; color: #000; white-space: nowrap; z-index: 2; }
.svg-num { font: bold 14px "DejaVu Sans", sans-serif; fill: #fff; text-anchor: middle; }
.svg-abc { font: italic bold 12px "Liberation Sans", sans-serif; fill: #fb6f6c; text-anchor: middle; }
.svg-white { fill: #fff; }
.pick { display: grid; align-items: center; background: #fdfdfd; border: 1px solid #c8c8c8; }
.pick > * { grid-area: 1 / 1; }
.pick select { appearance: none; width: 100%; height: 100%; padding: 0 20px 0 4px; }
.pick .chev { justify-self: end; width: 10px; height: 6px; margin-right: 4px; pointer-events: none; }
.pick-wide { width: 158px; height: 20px; }
.account { display: flex; align-items: center; gap: 7px; height: 24px; margin-top: 1px; padding: 0 3px 2px; border: 1px solid #a5a5a5; border-width: 1px 0; }
.pick-flat { width: 185px; height: 20px; border-color: #a0a0a0; background: #fff; }
.pick-flat select { padding-left: 1px; }
.quick { flex: 1; height: 20px; background: #fff; border: 1px solid #b0b0b0; }
.spin { display: flex; align-items: center; gap: 4px; margin-left: 8px; }
.spin input { width: 34px; height: 19px; padding-right: 6px; text-align: right; background: #fff; border: 1px solid #b0b0b0; }
.mini { display: flex; gap: 5px; align-items: center; }
.mini svg { width: 16px; height: 16px; }
.mode { display: flex; width: 128px; height: 20px; border: 1px solid #2b3f63; border-radius: 10px; background: #fff; font-weight: bold; overflow: hidden; }
.mode .live { display: flex; align-items: center; justify-content: center; gap: 8px; width: 60px; color: #fff; background: #2b3f63; border-radius: 10px; }
.mode .paper { flex: 1; padding-left: 6px; }
.tick { width: 10px; height: 10px; }

/* application rail */
.shell { flex: 1; display: flex; min-height: 0; }
.side { width: 101px; padding-right: 2px; display: flex; flex-direction: column; }
.collapse { height: 13px; margin: 1px 0 1px 1px; background: #fff; border: 1px solid #ccc; border-radius: 3px; }
.rail { position: relative; flex: 1 1 0; min-height: 0; overflow: hidden; display: flex; flex-direction: column; gap: 18px; padding-top: 25px; border-left: 1px solid #888; background: #353f4b; color: #fff; font-weight: bold; text-align: center; }
.rail a { flex: none; display: flex; flex-direction: column; align-items: center; gap: 10px; }
.rail a svg { width: 32px; height: 32px; }
.more { position: absolute; left: 44px; bottom: 1px; width: 12px; height: 6px; }
.tools { display: flex; flex-direction: column; gap: 1px; padding-bottom: 1px; }
.tools button { height: 24px; border: 1px solid #a8a59a; background: #efefef; }
.tools svg { width: 16px; height: 16px; fill: none; stroke: #2b3f63; stroke-width: 1.200px; }

/* windows */
.desk { flex: 1; min-width: 0; display: flex; flex-direction: column; padding-left: 2px; border-top: 3px solid #a0a09e; }
.panes { display: flex; gap: 2px; }
.left { width: 468px; display: flex; flex-direction: column; }
.window { border-top: 2px solid #454b55; border-left: 1px solid #808080; min-width: 0; }
.title { display: flex; align-items: center; height: 19px; padding: 0 1px 0 2px; background: #6f7d93; color: #f4f4f4; }
.title h2 { flex: 1; }
.qst { display: grid; place-items: center; width: 16px; height: 19px; margin-right: 4px; background: #0a316e; color: #fff; font-size: 7px; }
.ctl { display: flex; align-items: center; align-self: stretch; gap: 4px; padding: 0 2px 0 8px; background: #7b8798; color: #d0d0d0; }
.ctl svg { width: 14px; height: 14px; }
.ctl .wide { width: 20px; }
.title.active { margin-right: 4px; background: #24456f; }
.title.active .ctl { background: #3a577f; }
thead th { height: 18px; background: linear-gradient(#fff, #ededed); border-right: 1px solid #b5b5b5; border-bottom: 1px solid #999; line-height: 16px; text-align: center; }
tbody td, tbody th { border-right: 1px solid #e3e3e3; border-bottom: 1px solid #e3e3e3; }
.tab { padding: 0 9px; background: #1f3b70; color: #fff; font-weight: bold; border: 1px solid #999; border-width: 1px 2px 2px 1px; border-radius: 2px; }

.quotes { display: grid; grid-template-columns: 1fr 17px; margin: 2px 1px; border: 1px solid #909090; height: 198px; grid-template-rows: 179px 1fr; }
.qtable { width: 100%; align-self: start; background: #fff; font-weight: bold; }
.q1 { width: 71px; } .q2 { width: 75px; } .q3 { width: 73px; } .q4 { width: 94px; } .q5 { width: 29px; } .q6 { width: 66px; } .q7 { width: 8px; }
.qtable tbody th, .qtable tbody td { height: 20px; padding: 0 2px; text-align: right; font-weight: bold; }
.qtable tbody th { text-align: left; padding-left: 1px; }
.qtable .group td { background: #808080; color: #fff; text-align: left; padding-left: 1px; }
.vbar i { display: block; width: 2px; height: 27px; margin: 35px 0 0 8px; background: #8a8a8a; }
.hbar i { display: block; width: 240px; height: 2px; margin: 7px 0 0 17px; background: #8a8a8a; }
.tabline { height: 30px; border-top: 1px solid #a0a0a0; border-bottom: 1px solid #b0b0b0; padding-left: 1px; }
.tabline .tab { height: 26px; }
.status { height: 24px; margin: 2px 1px 3px; border: 1px solid #b0b0b0; }

.symbol { display: flex; align-items: center; gap: 3px; height: 24px; margin: 12px 3px 0 4px; padding: 1px; background: #fff; border: 1px solid #b0b0b0; }
.symbol input { flex: 1; min-width: 0; }
.sq { width: 18px; height: 20px; background: #fff; border: 1px solid #ccc; border-radius: 3px; }
.sq svg:not(.tri) { width: 14px; height: 16px; }
.sizes { display: flex; align-items: center; height: 24px; margin: 5px 3px 9px 8px; gap: 7px; }
.sizes label { display: flex; align-items: center; gap: 4px; }
.qty { width: 119px; height: 24px; padding-right: 4px; text-align: right; background: #fff; border: 1px solid #a0a0a0; }
.chg { flex: 1; display: flex; justify-content: space-between; height: 24px; margin-left: 4px; padding: 4px 4px; border: 1px solid #a0a0a0; }
input[type="radio"], input[type="checkbox"] { appearance: none; width: 14px; height: 14px; flex: none; border: 1px solid #777; background: #fafafa; }
input[type="radio"] { border-radius: 50%; }
input[type="checkbox"] { border-radius: 2px; }
input[type="radio"]:checked { border: 4px solid #0a62b8; background: #fff; }
.ltwrap { display: flex; border-top: 1px solid #909090; background: #fff; }
.ltable { width: 445px; background: #fff; }
.l1 { width: 51px; } .l2 { width: 80px; } .l3 { width: 50px; } .l4 { width: 100px; } .l5 { width: 34px; }
.exp { width: 10px; height: 12px; margin: 0 auto; }
.ltable tbody td { height: 17px; line-height: 16px; }
.ltable .price { background: #f1f1f1; text-align: center; }
.ltable .ask { background: #cc0007; color: #fff; padding-left: 1px; }
.ltable .bid { background: #003399; color: #fff; text-align: right; padding-right: 1px; }
.ltable .now { background: #ff6666; font-weight: bold; }
.ltable .low { background: #f00; color: #fff; }
.ltable .market td { border-top: 3px solid #a0a0a0; line-height: 13px; }
.dot { float: right; width: 10px; height: 10px; margin: 3px 2px; border-radius: 50%; background: #e87878; border: 1px solid #a33; }
.bid .dot { float: left; background: #7a94cc; border-color: #24407c; }
.market .dot { margin: 1px 2px; }
.ticks { display: block; height: 16px; margin-left: auto; background: repeating-linear-gradient(90deg, #000 0 1px, #fff 1px 2px); }
.market .ticks, .market .vol i { height: 13px; }
.t2 { width: 4px; background: linear-gradient(90deg, #000 0 1px, #fff 1px 3px, #000 3px); }
.t5 { width: 10px; }
.vol { display: grid; padding: 0 1px; }
.vol > * { grid-area: 1 / 1; }
.vol i { height: 14px; align-self: center; background: #b3b3d9; }
.vol span { padding-left: 1px; }
.lbar { flex: 1; margin-left: 5px; background: #f0f0f0; }
.lbar i { display: block; width: 2px; height: 144px; margin: 145px 0 0 9px; background: #8a8a8a; }

/* options window */
.options { flex: 1; display: flex; flex-direction: column; border-left-width: 2px; padding-right: 5px; }
.under { display: flex; height: 51px; padding: 2px 0; border-bottom: 1px solid #a0a0a0; }
.inst { width: 152px; padding: 0 0 0 6px; }
.instbox { display: flex; width: 146px; height: 21px; background: #fff; border: 1px solid #a0a0a0; padding-left: 2px; }
.instbox input { flex: 1; min-width: 0; }
.instbox .sq { height: 18px; }
.inst label { display: block; height: 15px; }
.steps { display: grid; grid-template-columns: 1fr 1fr; width: 46px; padding: 0 4px; }
.uwrap { flex: 1; min-width: 0; overflow: hidden; background: #fff; border: 1px solid #a0a0a0; }
.utable { width: 100%; }
.utable tbody td { height: 23px; text-align: right; padding: 0 2px; }
.utable tbody .first { text-align: left; padding-left: 1px; }
.utable .clip { text-align: right; }
.u1 { width: 100px; } .u2 { width: 70px; } .u3 { width: 75px; } .u4 { width: 82px; } .u5 { width: 93px; } .u6 { width: 154px; } .u7 { width: 52px; } .u8 { width: 102px; } .u9 { width: 109px; } .u10 { width: 59px; }
.greeks { display: grid; grid-template-columns: 196fr 227fr 239fr 232fr 227fr 218fr; gap: 2px; padding: 3px 0 1px; border-bottom: 1px solid #a0a0a0; }
.greeks div { display: flex; justify-content: space-between; height: 27px; padding: 5px 5px; border: 1px solid #a8a8a8; }
.months { height: 29px; padding: 3px 0 0 1px; border-bottom: 1px solid #c5c5c5; }
.months .tab { height: 24px; padding: 0 10px; }
.sides { display: flex; align-items: center; justify-content: space-between; height: 16px; padding: 0 11px; }
.jumps { display: flex; gap: 15px; margin-left: 4px; margin-right: 12px; }
.jumps svg { width: 8px; height: 8px; }
.chain { margin-right: 2px; height: 520px; border: 1px solid #8a8a92; }
.otable { width: 100%; background: #fff; }
.o86 { width: 86px; } .o84 { width: 84px; } .o80 { width: 80px; } .o79 { width: 79px; } .o78 { width: 78px; } .o76 { width: 76px; } .o75 { width: 75px; } .o72 { width: 72px; } .o71 { width: 71px; } .o67 { width: 67px; }
.otable tbody td { height: 21px; padding: 0 1px; text-align: right; line-height: 18px; }
.otable .px { padding-right: 3px; }
.otable .strike { text-align: center; background: #c0c0c0; border-color: #d0d0d0; }
.otable .edge { background: #aeaeae; }
.otable .atm { background: #d9d9d9; }
.charts { display: grid; grid-template-columns: 1fr 1fr; gap: 2px; padding-top: 3px; }
.chart { display: flex; height: 98px; background: #fff; border: 1px solid #a8a8a8; }
.plot { flex: 1; min-width: 0; padding: 5px 0 0 1px; }
.plot figcaption { text-align: center; height: 16px; }
.bars { display: grid; grid-template-columns: repeat(65, 1fr); align-items: end; height: 56px; border-bottom: 1px solid #b0b0b0; }
.bars i { grid-row: 1; margin: 0 1px; }
.bars .atmline { grid-row: 1; align-self: stretch; justify-self: center; border-left: 1px dashed #aaa; }
.calls .bars i { background: #3c763d; }
.puts .bars i { background: #763c3c; }
.axis { display: grid; grid-template-columns: repeat(65, 1fr); }
.axis span { grid-row: 1; white-space: nowrap; padding-left: 4px; }
.axis span::before { content: ""; display: block; width: 1px; height: 3px; background: #a0a0a0; }
.scale { width: 78px; padding: 1px 1px 0 0; display: flex; flex-direction: column; }
.scale .pick { height: 21px; }
.range { display: flex; flex-direction: column; justify-content: space-between; height: 56px; margin-top: 2px; padding: 1px 4px; border-left: 1px solid #b0b0b0; }
.foot { display: grid; grid-template-columns: 171fr 722fr 293fr 149fr; gap: 2px; margin-top: 2px; padding: 2px 1px; border: 1px solid #b0b0b0; border-width: 1px 0 2px; }
.foot .cell { height: 27px; padding: 5px 5px; border: 1px solid #a8a8a8; white-space: nowrap; }
.foot .show { display: grid; grid-template-columns: 158fr 158fr 196fr 196fr; }
.foot label { display: flex; align-items: center; gap: 4px; }

/* ticker and workspace tabs */
.ticker { border-top-color: #808080; }
.tape { display: flex; gap: 3px; height: 62px; margin: 1px 4px 0 0; padding: 2px 0 0 2px; border: 1px solid #a0a0a0; border-width: 1px 0; }
.tape button { width: 20px; height: 57px; background: #fdfdfd; border: 1px solid #c8c8c8; border-radius: 3px; }
.tape ul { flex: 1; min-width: 0; margin-top: -2px; padding-top: 14px; display: grid; grid-template-columns: 50px 187px 213px 187px 213px 216px 206px 208px 208px 1fr; overflow: hidden; background: #fff; border-left: 1px solid #a0a0a0; list-style: none; font-weight: bold; }
.tape li { white-space: nowrap; overflow: hidden; }
.tape p { display: flex; gap: 10px; height: 15px; }
.tape .dn, .tape .up { width: 16px; height: 9px; background: #f00; clip-path: polygon(0 0, 100% 0, 50% 100%); }
.tape li:first-child .dn { margin-left: 3px; }
.tape .up { background: #00a000; clip-path: polygon(50% 0, 100% 100%, 0 100%); align-self: center; }
.spaces { display: grid; grid-template-columns: 75px 78px 80px 70px 112px 70px 57px 97px 134px 115px 89px 63px 93px 92px 59px 86px 48px 64px 54px 53px 102px 101px; margin-left: -2px; height: 29px; border-top: 1px solid #a0a0a0; color: #24457d; }
.spaces button { height: 26px; background: #dfdfdf; border: 1px solid #b0b0b0; border-width: 0 2px 1px 1px; border-radius: 0 0 4px 4px; }
.spaces .warn { color: #cf6030; }
.spaces .on { background: #1f3b70; color: #fff; font-weight: bold; }
```
FILE: app.js
```js
// Option chain rows. Leading asterisks give the highlight strength of a recently changed cell.
const chain = `2^51.0|-0.0096|0.0317|0.9425|~ 11.09|2^50.5|2^49.5|3^08.5 P|104.25|0^00.0 P|0^00.0|0^00.5|||||
2^35.0|-0.0090|0.0391|0.9418|~ 10.17|2^34.5|2^33.5|2^56.5 P|104.50|0^00.0 P|0^00.0|**0^00.5|||||
2^19.0|-0.0084|0.0469|0.9407|~ 9.26|2^18.5|2^17.5|2^40.5 P|104.75|0^00.0 P|*0^00.0|**0^00.5|||||
2^03.0|-0.0079|0.0558|0.9393|~ 8.36|2^02.5|2^02.0|2^24.5 P|105.00|0^00.0 P|0^00.0|0^01.0|||||
1^51.0|-0.0073|0.0699|0.9372|~ 7.46|1^51.0|1^50.0|2^08.5 P|105.25|0^00.0 P|**0^00.5|0^01.0|||||
1^35.0|-0.0068|0.0906|0.9341|~ 6.56|1^35.0|1^34.0|1^40.0|105.50|0^00.0 P|0^00.5|**0^01.0|||||
1^20.0|-0.0086|0.1458|0.9136|~ 6.21|1^19.5|1^18.5|1^41.0 P|105.75|0^00.5 P|**0^01.0|0^01.5|**~ 5.64|**-0.0616|**0.1448|**-0.0063|**0^01.5
1^04.0|-0.0082|0.1983|0.9011|~ 5.32|1^04.0|1^03.0|1^25.0 P|106.00|0^00.5 P|0^01.5|0^02.0|~ 4.90|-0.0772|0.1992|-0.0064|0^01.5
**0^52.0|**-0.0079|**0.2875|**0.8801|**~ 4.43|**0^53.0|0^52.0|1^09.0 P|106.25|0^02.5|***0^02.5|**0^03.0|***~ 4.15|***-0.1018|***0.2898|***-0.0066|***0^02.0
0^37.5|-0.0099|0.4460|0.8144|~ 3.98|0^39.0|0^38.5|0^40.5|106.50|0^04.0|**0^04.5|**0^05.0|**~ 3.89|**-0.1786|**0.4530|**-0.0094|**0^03.5
***0^24.5|***-0.0123|***0.6452|***0.6969|***~ 3.64|**0^26.5|***0^26.0|0^29.5|106.75|0^08.5|**0^08.0|***0^09.0|***~ 3.61|***-0.3010|***0.6497|***-0.0123|***0^06.5
**0^14.0|**-0.0145|**0.7634|**0.5215|**~ 3.52|**0^16.5|**0^15.5|0^17.5|107.00|0^14.5|**0^13.5|***0^14.5|***~ 3.51|***-0.4778|***0.7667|***-0.0145|***0^12.5
**0^06.5|**-0.0130|**0.7456|**0.3222|**~ 3.24|**0^08.5|0^07.5|0^13.0|107.25|0^21.5|0^22.0|*0^22.5|*~ 3.24|*-0.6771|*0.7456|*-0.0130|*0^20.5
***0^02.5|***-0.0092|***0.5137|***0.1549|***~ 3.13|***0^04.0|***0^03.0|0^04.0|107.50|0^33.5|0^33.5|0^34.0|~ 3.13|-0.8432|0.5041|-0.0091|0^32.5
0^00.5|-0.0048|0.2515|0.0570|~ 3.07|0^02.0|0^01.5|0^01.5|107.75|0^47.0|0^47.5|0^48.5|~ 3.08|-0.9348|0.2069|-0.0047|0^47.0
**0^00.5|**-0.0025|**0.1104|**0.0224|**~ 3.25|**0^01.0|0^00.5|0^01.0|108.00|0^63.5|**0^62.5|0^63.5|**~ 3.28|**-1.0000|**0.0000|**-0.0025|**0^62.5
*0^00.0|*-0.0009|*0.0381|*0.0066|*~ 3.30|0^01.0|*0^00.0|0^00.5 P|108.25|1^15.0|1^14.0|1^15.0|~ 3.46|-1.0000|0.0000|-0.0011|1^14.5
**0^00.0|**-0.0012|**0.0340|**0.0076|**~ 4.06|**0^00.5|0^00.0|0^00.5 P|108.50|1^31.5|**1^30.0|1^31.0|**~ 4.33|**-1.0000|**0.0000|**-0.0016|**1^30.5
|||||0^00.5||0^00.0 P|108.75|1^23.5 P|1^46.0|1^47.0|~ 4.66|-1.0000|0.0000|-0.0010|1^46.5
|||||0^00.0||0^00.0 P|109.00|1^39.5 P|1^62.0|1^63.0|~ 5.52|-1.0000|0.0000|-0.0015|1^62.5
|||||0^00.0||0^00.0 P|109.25|1^55.5 P|2^14.0|2^14.5|~ 6.39|-1.0000|0.0000|-0.0020|2^14.5
|||||**0^00.0||0^00.0 P|109.50|2^07.5 P|2^30.0|2^30.5|~ 7.25|-1.0000|0.0000|-0.0025|2^30.5
|||||0^00.0||0^00.0 P|109.75|2^23.5 P|2^45.5|2^47.0|~ 8.12|-1.0000|0.0000|-0.0030|2^46.5`.split("\n");

const chainBody = document.getElementById("chain-rows");
chain.forEach((line, r) => {
  const tr = chainBody.insertRow();
  line.split("|").forEach((raw, c) => {
    const td = tr.insertCell();
    const heat = raw.match(/^\**/)[0].length;
    td.textContent = raw.slice(heat);
    if (heat) td.classList.add("y" + heat);
    if (raw.includes("^")) td.classList.add("px");
    if (c === 8) {
      td.classList.add("strike");
      if (r === 0 || r === chain.length - 1) td.classList.add("edge");
      if (raw === "107.00") td.classList.add("atm");
    }
  });
});

// Price ladder: price, bid size, ask size, volume, own-order dot, mini-chart ticks
const ladder = [
  ["107^03.75", "", "", 9727], ["107^03.50", "", "", 25906], ["107^03.25", "", 2582, 29293],
  ["107^03.00", "", 2667, 9070], ["107^02.75", "", 2712, 19297], ["107^02.50", "", 2781, 11477],
  ["107^02.25", "", 3320, 16133], ["107^02.00", "", 2927, 14320], ["107^01.75", "", 2972, 33583],
  ["107^01.50", "", 3280, 39549, 1], ["107^01.25", "", 2509, 19453, 1], ["107^01.00", "", 829, 3688, 0, 2],
  ["107^00.75 (...", 1682, "", 36483, 1, 5], ["107^00.50", 2768, "", 25496, 1, 2], ["107^00.25", 2781, "", 13880],
  ["107^00.00", 2877, "", 7013], ["106^31.75", 2963, "", 58], ["106^31.50", 3483, "", 0],
  ["106^31.25", 2669, "", 0], ["106^31.00", 2674, "", 0], ["106^30.75", 2432, "", 0],
  ["106^30.50", 2314, "", 0], ["106^30.25", "", "", 0], ["106^30.00", "", "", 0]
];
const peak = 39549;
document.getElementById("ladder-rows").innerHTML = ladder.map(([price, bid, ask, vol, dot, ticks]) => {
  const mark = price.includes("(") ? " now" : price === "106^31.75" ? " low" : "";
  const spot = dot ? '<i class="dot"></i>' : "";
  return `<tr${mark === " now" ? ' class="market"' : ""}><td></td>` +
    `<td>${ticks ? `<i class="ticks t${ticks}"></i>` : ""}</td>` +
    `<td${bid ? ' class="bid"' : ""}>${bid ? spot + bid : ""}</td>` +
    `<td class="price${mark}">${price}</td>` +
    `<td${ask ? ' class="ask"' : ""}>${ask ? spot + ask : ""}</td><td></td>` +
    `<td>${vol ? `<div class="vol"><i style="width:${vol * 100 / peak}%"></i><span>${vol}</span></div>` : ""}</td></tr>`;
}).join("");

// Volatility histograms over 65 strikes
const calls = [55,52,47,34,32,31,30,29,28,27,25,24,23,22,21,20,18,17,16,15,14,13,12,11,9,8,7,7,6,5,4,4,4,3,3,3,3,3,4];
const puts = [9,7,5,5,4,4,3,3,3,3,4,6,7,9,10,12,14,16,18,20,22,24,26,28,30,32,34,36,38,40,42,43,45,47,49,51,53,55];
const strikes = ["95.50","100.25","101.75","103.25","104.75","106.25","107.75","109.25","110.75","112.25","113.75"];
function histogram(name, values, start) {
  document.getElementById(name + "-bars").innerHTML =
    '<b class="atmline" style="grid-column:33"></b>' +
    values.map((v, i) => `<i style="grid-column:${start + i};height:${v}px"></i>`).join("");
  document.getElementById(name + "-axis").innerHTML =
    strikes.map((s, i) => `<span style="grid-column:${i ? i * 6 : 1} / span 5">${s}</span>`).join("");
}
histogram("calls", calls, 1);
histogram("puts", puts, 28);
```
